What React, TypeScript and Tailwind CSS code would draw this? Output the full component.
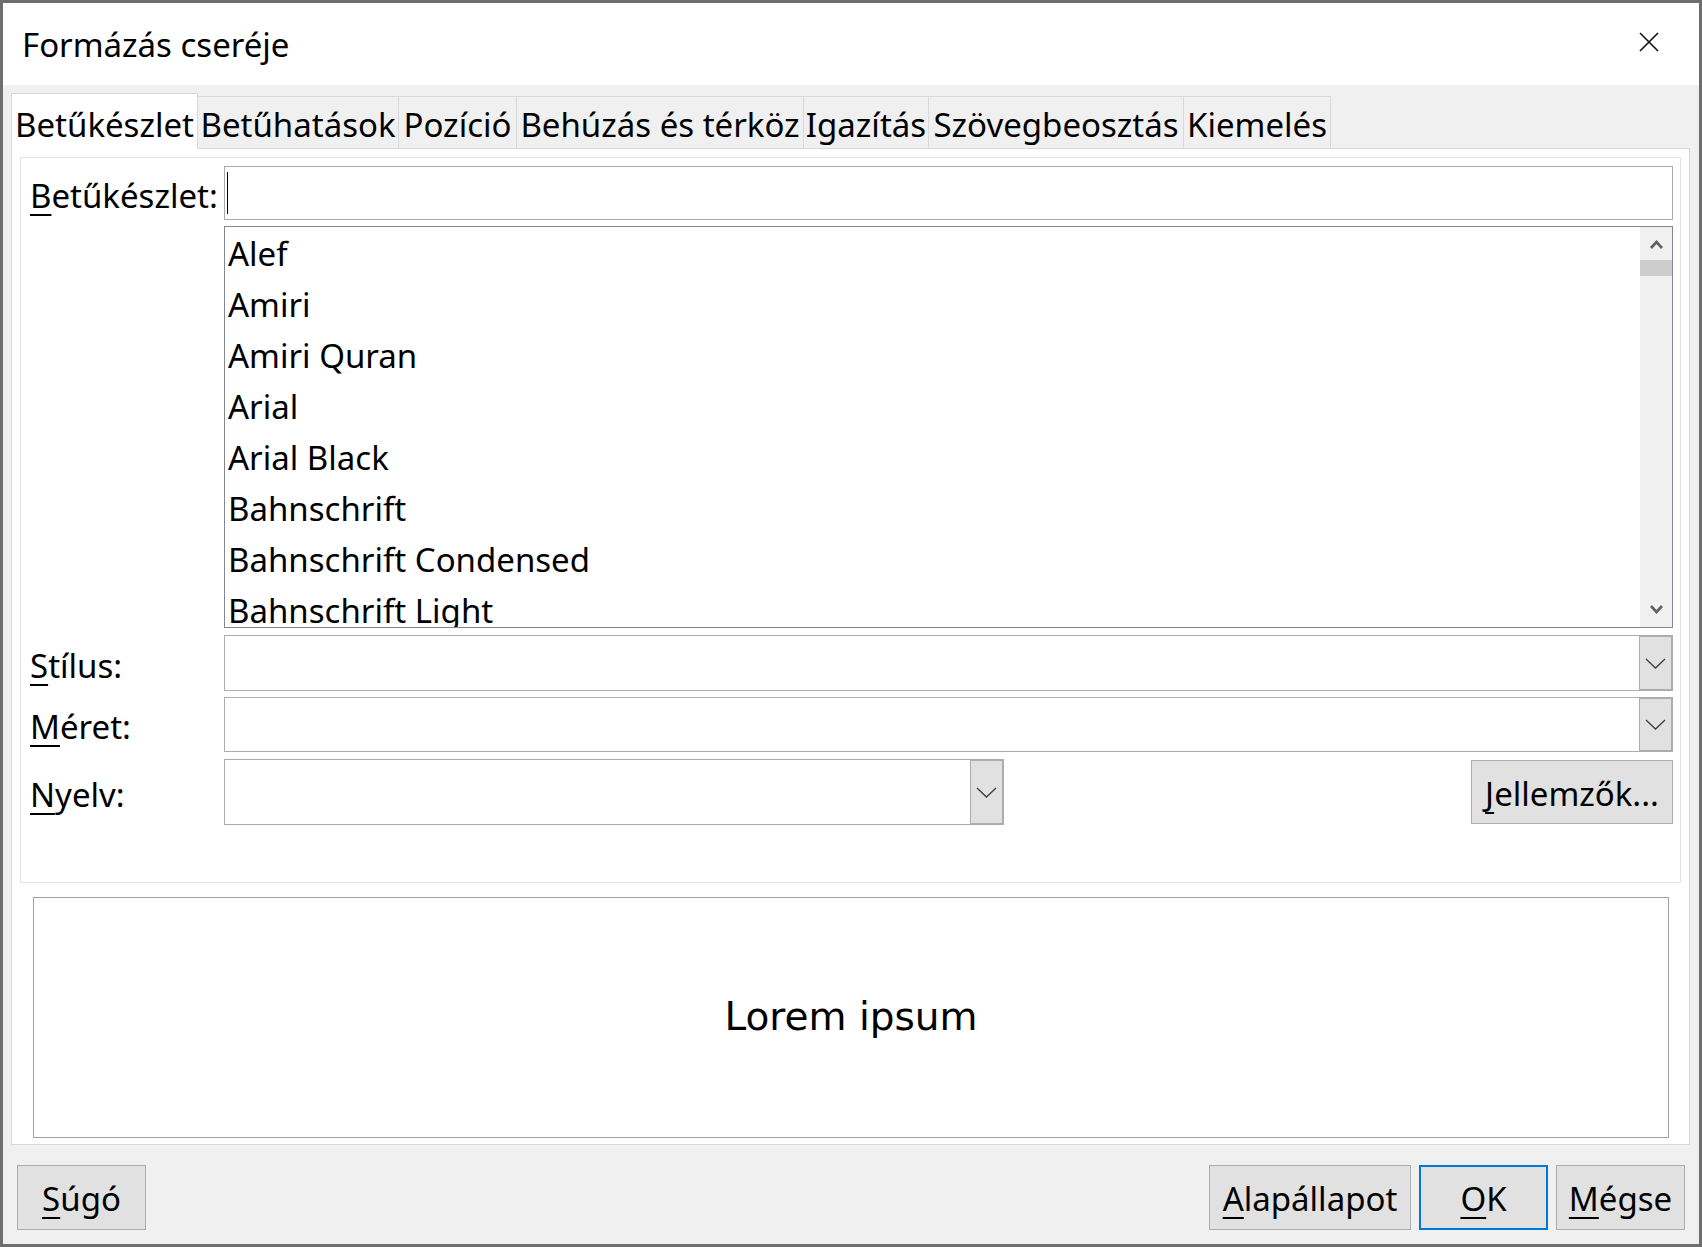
import React from 'react'

const ui = { fontFamily: '"Noto Sans", "Open Sans", sans-serif' }

const tabs = [
  { label: 'Betűkészlet', w: 'w-[187px]' },
  { label: 'Betűhatások', w: 'w-[201px]' },
  { label: 'Pozíció', w: 'w-[118px]' },
  { label: 'Behúzás és térköz', w: 'w-[287px]' },
  { label: 'Igazítás', w: 'w-[125px]' },
  { label: 'Szövegbeosztás', w: 'w-[255px]' },
  { label: 'Kiemelés', w: 'w-[147px]' },
]

const fonts = [
  'Alef',
  'Amiri',
  'Amiri Quran',
  'Arial',
  'Arial Black',
  'Bahnschrift',
  'Bahnschrift Condensed',
  'Bahnschrift Light',
]

function Mn({ c, rest }: { c: string; rest: string }) {
  return (
    <span>
      <span className="underline decoration-2 underline-offset-[6px]">{c}</span>
      {rest}
    </span>
  )
}

function Chevron() {
  return (
    <svg width="21" height="11" viewBox="0 0 21 11">
      <polyline points="1,1 10.5,10 20,1" fill="none" stroke="#3c3c3c" strokeWidth="1.3" />
    </svg>
  )
}

function ScrollArrow({ up }: { up?: boolean }) {
  return (
    <svg width="13" height="9" viewBox="0 0 13 9">
      <polyline
        points={up ? '1,8 6.5,2 12,8' : '1,1 6.5,7 12,1'}
        fill="none"
        stroke="#606060"
        strokeWidth="2.6"
      />
    </svg>
  )
}

function DropButton() {
  return (
    <div className="w-[33px] h-full bg-[#e1e1e1] border border-[#adadad] flex items-center justify-center">
      <Chevron />
    </div>
  )
}

function Button({ children, w, primary }: { children: React.ReactNode; w: string; primary?: boolean }) {
  return (
    <button
      className={`${w} h-[65px] bg-[#e1e1e1] flex items-center justify-center text-[33px] text-black pt-[2px] ${
        primary ? 'border-2 border-[#0078d7]' : 'border border-[#adadad]'
      }`}
    >
      {children}
    </button>
  )
}

export default function App() {
  return (
    <div
      className="w-[1702px] h-[1247px] border-[3px] border-[#6e6e6e] bg-[#f0f0f0] flex flex-col text-black overflow-hidden"
      style={ui}
    >
      {/* title bar */}
      <div className="h-[82px] bg-white flex items-center justify-between pl-[19px] pr-[40px] shrink-0">
        <span className="text-[33px] leading-none">Formázás cseréje</span>
        <svg width="20" height="20" viewBox="0 0 20 20" className="mt-[-4px]">
          <path d="M1 1 L19 19 M19 1 L1 19" stroke="#111" strokeWidth="1.6" />
        </svg>
      </div>

      {/* tabs */}
      <div className="h-[63px] flex items-end pl-[8px] shrink-0">
        {tabs.map((t, i) =>
          i === 0 ? (
            <div
              key={t.label}
              className={`${t.w} h-[56px] mb-[-1px] relative z-10 bg-white border-l border-t border-r border-[#d9d9d9] flex items-center justify-center text-[33px] whitespace-nowrap pt-[6px]`}
            >
              {t.label}
            </div>
          ) : (
            <div
              key={t.label}
              className={`${t.w} h-[52px] bg-[#f0f0f0] border-t border-r border-[#d9d9d9] flex items-center justify-center text-[33px] whitespace-nowrap pt-[4px]`}
            >
              {t.label}
            </div>
          ),
        )}
      </div>

      {/* panel */}
      <div className="ml-[8px] mr-[9px] h-[997px] bg-white border border-[#d9d9d9] p-[8px] flex flex-col shrink-0">
        <div className="h-[726px] border border-[#e3e3e3] pl-[9px] pr-[7px] pt-[8px] flex flex-col shrink-0">
          {/* font name */}
          <div className="flex items-center h-[54px]">
            <div className="w-[194px] text-[33px] pt-[6px]">
              <Mn c="B" rest="etűkészlet:" />
            </div>
            <div className="flex-1 h-full border border-[#a9a9a9] flex items-center pl-[2px]">
              <div className="w-px h-[42px] bg-black" />
            </div>
          </div>

          {/* font list */}
          <div className="flex mt-[6px]">
            <div className="w-[194px]" />
            <div className="flex-1 h-[402px] border border-[#828790] flex">
              <div className="flex-1 pl-[3px] pt-[1px] overflow-hidden">
                {fonts.map((f) => (
                  <div key={f} className="h-[51px] flex items-center text-[33px] whitespace-nowrap">
                    {f}
                  </div>
                ))}
              </div>
              <div className="w-[32px] bg-[#f0f0f0] flex flex-col">
                <div className="h-[33px] flex items-center justify-center pt-[2px]">
                  <ScrollArrow up />
                </div>
                <div className="h-[16px] bg-[#cdcdcd]" />
                <div className="flex-1" />
                <div className="h-[33px] flex items-center justify-center pb-[2px]">
                  <ScrollArrow />
                </div>
              </div>
            </div>
          </div>

          {/* style */}
          <div className="flex items-center h-[56px] mt-[7px]">
            <div className="w-[194px] text-[33px] pt-[6px]">
              <Mn c="S" rest="tílus:" />
            </div>
            <div className="flex-1 h-full border border-[#adadad] flex justify-end">
              <DropButton />
            </div>
          </div>

          {/* size */}
          <div className="flex items-center h-[55px] mt-[6px]">
            <div className="w-[194px] text-[33px] pt-[4px]">
              <Mn c="M" rest="éret:" />
            </div>
            <div className="flex-1 h-full border border-[#adadad] flex justify-end">
              <DropButton />
            </div>
          </div>

          {/* language */}
          <div className="flex items-center h-[66px] mt-[7px]">
            <div className="w-[194px] text-[33px] pt-[5px]">
              <Mn c="N" rest="yelv:" />
            </div>
            <div className="w-[780px] h-full border border-[#adadad] flex justify-end">
              <DropButton />
            </div>
            <div className="flex-1" />
            <button className="w-[202px] h-[64px] bg-[#e1e1e1] border border-[#adadad] flex items-center justify-center text-[33px] pt-[4px]">
              <Mn c="J" rest="ellemzők..." />
            </button>
          </div>
        </div>

        {/* preview */}
        <div className="mt-[14px] ml-[13px] mr-[12px] h-[241px] border border-[#a0a0a0] bg-white flex items-center justify-center shrink-0">
          <span className="text-[39px]" style={{ fontFamily: '"DejaVu Sans", sans-serif' }}>
            Lorem ipsum
          </span>
        </div>
      </div>

      {/* buttons */}
      <div className="flex items-start pt-[20px] px-[14px] gap-[8px]">
        <Button w="w-[129px]">
          <Mn c="S" rest="úgó" />
        </Button>
        <div className="flex-1" />
        <Button w="w-[202px]">
          <Mn c="A" rest="lapállapot" />
        </Button>
        <Button w="w-[129px]" primary>
          <Mn c="O" rest="K" />
        </Button>
        <Button w="w-[129px]">
          <Mn c="M" rest="égse" />
        </Button>
      </div>
    </div>
  )
}
